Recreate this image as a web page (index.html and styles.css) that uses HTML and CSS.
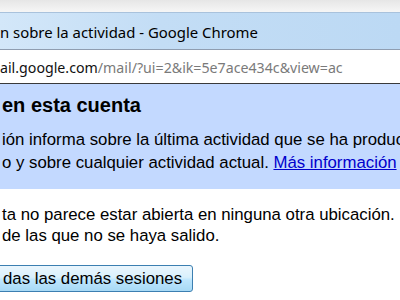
FILE: index.html
```html
<!DOCTYPE html>
<html lang="es">
<head>
<meta charset="utf-8">
<title>Información sobre la actividad</title>
<link rel="stylesheet" href="styles.css">
</head>
<body>
<div class="window">
  <div class="frame-top"></div>
  <div class="titlebar"><span class="title">n sobre la actividad - Google Chrome</span></div>
  <div class="omnibox"><span class="host">ail.google.com</span><span class="path">/mail/?ui=2&amp;ik=5e7ace434c&amp;view=ac</span></div>
  <div class="panel">
    <h1 class="panel-title">en esta cuenta</h1>
    <p class="panel-text">ión informa sobre la última actividad que se ha producido en este<br>o y sobre cualquier actividad actual. <a class="link" href="#">Más información</a></p>
  </div>
  <div class="content">
    <p class="content-text">ta no parece estar abierta en ninguna otra ubicación.<br>de las que no se haya salido.</p>
    <button class="btn" type="button">das las demás sesiones</button>
  </div>
</div>
</body>
</html>
```
FILE: styles.css
```css
html, body {
  margin: 0;
  padding: 0;
  background: #ffffff;
}
.window {
  width: 400px;
  height: 300px;
  overflow: hidden;
  display: flex;
  flex-direction: column;
}
.frame-top {
  height: 12px;
  flex: none;
  background: linear-gradient(#e6e6e6, #f6f6f6);
  border-bottom: 1px solid #a9c2dc;
}
.titlebar {
  height: 36px;
  flex: none;
  background: linear-gradient(90deg, #d3e7f9 0%, #c3ddf5 40%, #bcd9f4 100%);
  display: flex;
  align-items: center;
  white-space: nowrap;
  overflow: hidden;
}
.title {
  font-family: "Noto Sans", "DejaVu Sans", sans-serif;
  font-size: 14.9px;
  color: #000;
  margin-top: 2px;
}
.omnibox {
  flex: none;
  background: #fff;
  border-top: 1px solid #8f9db0;
  border-bottom: 1px solid #3a3a3a;
  display: flex;
  align-items: center;
  white-space: nowrap;
  overflow: hidden;
  font-family: "Noto Sans", "DejaVu Sans", sans-serif;
  font-size: 14.2px;
  padding-top: 2px;
  box-sizing: border-box;
  height: 35px;
}
.host { color: #111; }
.path { color: #7a7a7a; }
.panel {
  background: #c3d9ff;
  padding: 8px 0 15px 2px;
  flex: none;
  white-space: nowrap;
  overflow: hidden;
}
.panel-title {
  margin: 0 0 10px 0;
  font-family: "Liberation Sans", Arial, sans-serif;
  font-size: 20px;
  font-weight: bold;
  line-height: 26px;
  color: #000;
}
.panel-text {
  margin: 0;
  font-family: "Liberation Sans", Arial, sans-serif;
  font-size: 16.8px;
  line-height: 23px;
  color: #000;
}
.link {
  color: #0000cc;
  text-decoration: underline;
}
.content {
  padding: 15px 0 0 2px;
  white-space: nowrap;
  font-family: "Liberation Sans", Arial, sans-serif;
}
.content-text {
  margin: 0 0 19px 0;
  font-size: 16.8px;
  line-height: 21px;
  color: #000;
}
.btn {
  margin-left: -12px;
  height: 27px;
  padding: 0 10px 0 12px;
  font-family: "Liberation Sans", Arial, sans-serif;
  font-size: 16.8px;
  color: #000;
  border: 1px solid #3c7fb1;
  border-radius: 3px;
  background: linear-gradient(#eaf6fd 0%, #d9f0fc 45%, #bee6fd 55%, #a7d9f5 100%);
}
```
